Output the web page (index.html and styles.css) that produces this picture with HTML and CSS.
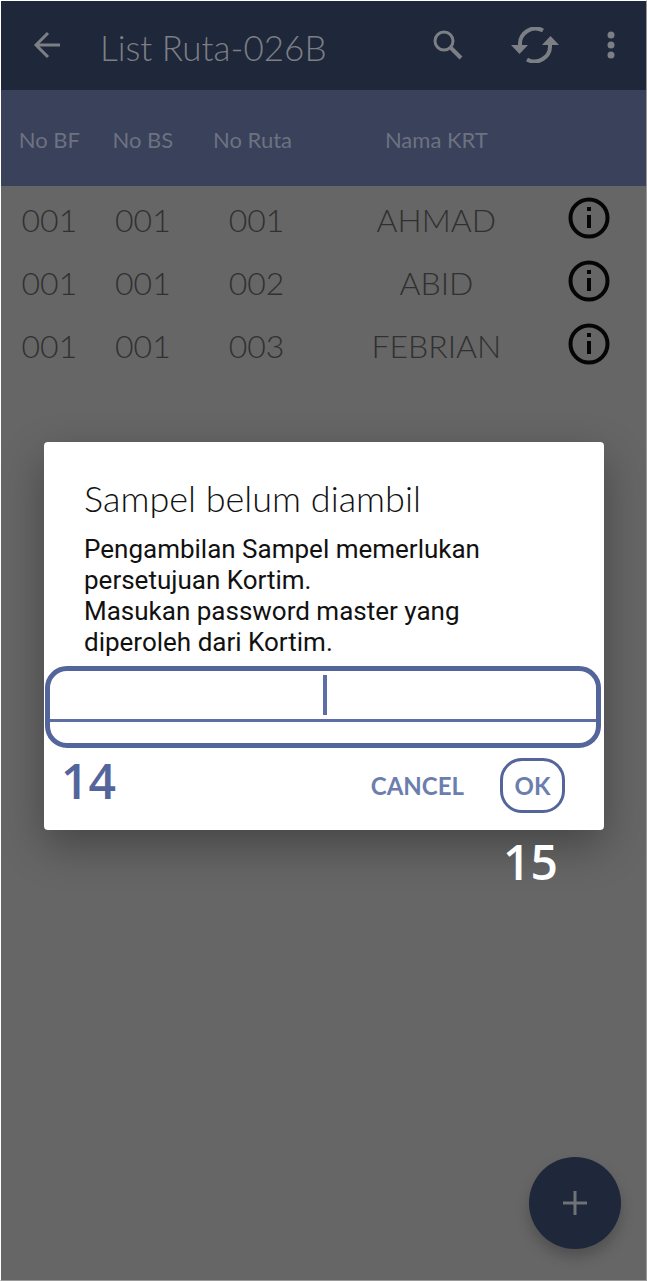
FILE: index.html
```html
<!DOCTYPE html>
<html lang="id">
<head>
<meta charset="utf-8">
<meta name="viewport" content="width=device-width, initial-scale=1">
<title>List Ruta-026B</title>
<link rel="stylesheet" href="styles.css">
</head>
<body>
<div class="screen">
  <header class="appbar">
    <button class="icon-button" type="button" aria-label="Kembali">
      <svg width="28" height="28" viewBox="0 0 28 28" fill="none" stroke="currentColor" stroke-width="3"><path d="M27 14H3M15 2L3 14l12 12"/></svg>
    </button>
    <h1 class="appbar-title">List Ruta-026B</h1>
    <div class="appbar-actions">
      <button class="icon-button" type="button" aria-label="Cari">
        <svg width="30" height="30" viewBox="0 0 30 30" fill="none" stroke="currentColor"><circle cx="11" cy="11" r="9" stroke-width="3"/><path d="M17.500 17.500L28 28" stroke-width="4"/></svg>
      </button>
      <button class="icon-button" type="button" aria-label="Muat ulang">
        <svg width="48" height="36" viewBox="0 0 48 36" fill="none"><path d="M9 18A15.500 15.500 0 0 1 32 3.500M39 18A15.500 15.500 0 0 1 16 32.500" stroke="currentColor" stroke-width="4"/><path d="M0 18h17l-8.500 9zM31 18h17l-8.500-9z" fill="currentColor"/></svg>
      </button>
      <button class="icon-button" type="button" aria-label="Menu">
        <svg width="8" height="28" viewBox="0 0 8 28" fill="currentColor"><circle cx="4" cy="4" r="3.500"/><circle cx="4" cy="14" r="3.500"/><circle cx="4" cy="24" r="3.500"/></svg>
      </button>
    </div>
  </header>

  <main>
    <table class="ruta">
      <colgroup><col class="col-bf"><col class="col-bs"><col class="col-ruta"><col class="col-name"><col class="col-info"></colgroup>
      <thead>
        <tr><th>No BF</th><th>No BS</th><th>No Ruta</th><th>Nama KRT</th><td></td></tr>
      </thead>
      <tbody>
        <tr><td>001</td><td>001</td><td class="number">001</td><td>AHMAD</td><td class="info"><button class="icon-button" type="button" aria-label="Info AHMAD"><svg width="42" height="42" viewBox="0 0 42 42"><circle cx="21" cy="21" r="18.500" fill="none" stroke="currentColor" stroke-width="4"/><path d="M19 10h4v4h-4zM19 18h4v13h-4z" fill="currentColor"/></svg></button></td></tr>
        <tr><td>001</td><td>001</td><td class="number">002</td><td>ABID</td><td class="info"><button class="icon-button" type="button" aria-label="Info ABID"><svg width="42" height="42" viewBox="0 0 42 42"><circle cx="21" cy="21" r="18.500" fill="none" stroke="currentColor" stroke-width="4"/><path d="M19 10h4v4h-4zM19 18h4v13h-4z" fill="currentColor"/></svg></button></td></tr>
        <tr><td>001</td><td>001</td><td class="number">003</td><td>FEBRIAN</td><td class="info"><button class="icon-button" type="button" aria-label="Info FEBRIAN"><svg width="42" height="42" viewBox="0 0 42 42"><circle cx="21" cy="21" r="18.500" fill="none" stroke="currentColor" stroke-width="4"/><path d="M19 10h4v4h-4zM19 18h4v13h-4z" fill="currentColor"/></svg></button></td></tr>
      </tbody>
    </table>
  </main>

  <button class="fab" type="button" aria-label="Tambah">
    <svg width="24" height="24" viewBox="0 0 24 24" stroke="currentColor" stroke-width="3"><path d="M12 0v24M0 12h24"/></svg>
  </button>

  <div class="overlay">
    <section class="dialog" role="dialog" aria-labelledby="dialog-title">
      <h2 class="dialog-title" id="dialog-title">Sampel belum diambil</h2>
      <label class="dialog-text" for="password">Pengambilan Sampel memerlukan persetujuan Kortim.<br>Masukan password master yang diperoleh dari Kortim.</label>
      <div class="field">
        <input class="field-input" id="password" type="password">
        <span class="caret"></span>
      </div>
      <div class="actions">
        <span class="step">14</span>
        <button class="action" type="button">CANCEL</button>
        <button class="action action-ok" type="button">OK</button>
      </div>
      <span class="step step-outside">15</span>
    </section>
  </div>
</div>
</body>
</html>
```
FILE: styles.css
```css
* {
  box-sizing: border-box;
}

body {
  margin: 0;
  font-family: Lato, "Open Sans", sans-serif;
}

button {
  margin: 0;
  padding: 0;
  border: 0;
  background: none;
  color: inherit;
  font: inherit;
}

svg {
  display: block;
}

.screen {
  position: relative;
  min-height: 100vh;
  border: 1px solid #ffffff;
  border-right-color: #999999;
  border-bottom-color: #999999;
  background: #666666;
}

.appbar {
  display: flex;
  align-items: center;
  height: 89px;
  padding: 0 31px 2px 32px;
  background: #1f273a;
  color: #7c7f84;
}

.appbar-title {
  flex: 1;
  margin: 0 0 0 39px;
  padding-top: 4px;
  font-size: 35px;
  line-height: 40px;
  font-weight: 300;
  white-space: nowrap;
}

.appbar-actions {
  display: flex;
  align-items: center;
  gap: 48px;
}

.ruta {
  width: 100%;
  border-collapse: collapse;
  table-layout: fixed;
  text-align: center;
}

.col-bf {
  width: 15%;
}

.col-bs {
  width: 14%;
}

.col-ruta {
  width: 20%;
}

.col-name {
  width: 37%;
}

.ruta th,
.ruta td {
  padding: 0;
}

.ruta thead tr {
  height: 96px;
  background: #39415b;
  color: #6d7280;
}

.ruta th {
  padding-top: 2px;
  font-size: 22px;
  font-weight: 400;
}

.ruta tbody tr {
  height: 63px;
}

.ruta tbody td {
  padding-top: 5px;
  color: #303030;
  font-size: 32px;
  line-height: 40px;
  font-weight: 300;
}

.ruta tbody .number {
  padding-left: 8px;
}

.ruta tbody .info {
  padding: 0 24px 2px 0;
  color: #050505;
}

.info .icon-button {
  display: inline-block;
  vertical-align: middle;
}

.fab {
  position: absolute;
  right: 25px;
  bottom: 31px;
  display: grid;
  place-items: center;
  width: 92px;
  height: 92px;
  border-radius: 50%;
  background: #1f273a;
  color: #6f7276;
  box-shadow: 0 8px 14px rgba(0, 0, 0, 0.22);
}

.overlay {
  position: absolute;
  inset: 0;
  display: flex;
  align-items: center;
  padding: 0 42px 9px 43px;
}

.dialog {
  position: relative;
  width: 100%;
  padding: 36px 0 17px;
  border-radius: 4px;
  background: #ffffff;
  box-shadow: 0 16px 44px rgba(0, 0, 0, 0.32);
}

.dialog-title {
  margin: 0 40px 16px;
  color: #111111;
  font-size: 36px;
  line-height: 40px;
  font-weight: 300;
}

.dialog-text {
  display: block;
  margin: 0 80px 8px 40px;
  color: #111111;
  font-family: Roboto, sans-serif;
  font-size: 26px;
  line-height: 31px;
}

.field {
  position: relative;
  height: 82px;
  margin: 0 3px 0 1px;
  border: 5px solid #54659b;
  border-radius: 22px;
}

.field-input {
  display: block;
  width: 100%;
  height: 51px;
  padding: 0 16px;
  border: 0;
  border-bottom: 3px solid #5b6ea5;
  outline: 0;
  background: transparent;
  font-size: 26px;
  text-align: center;
}

.caret {
  position: absolute;
  top: 4px;
  left: 50%;
  width: 4px;
  height: 40px;
  background: #5b6ea5;
}

.actions {
  display: flex;
  align-items: center;
  height: 55px;
  margin: 10px 39px 0 17px;
}

.step {
  flex: 1;
  padding-bottom: 10px;
  color: #54659b;
  font-family: "Open Sans", sans-serif;
  font-size: 48px;
  line-height: 48px;
  font-weight: 600;
}

.action {
  color: #6b7eae;
  font-size: 24px;
  line-height: 28px;
  font-weight: 700;
}

.action-ok {
  width: 65px;
  height: 55px;
  margin-left: 36px;
  border: 3px solid #54659b;
  border-radius: 22px;
}

.step-outside {
  position: absolute;
  top: 100%;
  right: 46px;
  padding-top: 8px;
  color: #ffffff;
}
```
